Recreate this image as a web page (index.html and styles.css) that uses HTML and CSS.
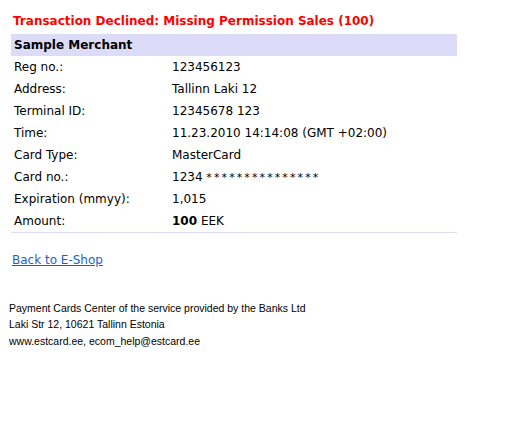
FILE: index.html
```html
<!DOCTYPE html>
<html>
<head>
<meta charset="utf-8">
<link rel="stylesheet" href="styles.css">
</head>
<body>
<div class="page">
  <h1 class="title">Transaction Declined: Missing Permission Sales (100)</h1>
  <table class="info">
    <tr class="head"><th colspan="2">Sample Merchant</th></tr>
    <tr><td class="lbl">Reg no.:</td><td>123456123</td></tr>
    <tr><td class="lbl">Address:</td><td>Tallinn Laki 12</td></tr>
    <tr><td class="lbl">Terminal ID:</td><td>12345678 123</td></tr>
    <tr><td class="lbl">Time:</td><td>11.23.2010 14:14:08 (GMT +02:00)</td></tr>
    <tr><td class="lbl">Card Type:</td><td>MasterCard</td></tr>
    <tr><td class="lbl">Card no.:</td><td>1234 <span class="stars">***************</span></td></tr>
    <tr><td class="lbl">Expiration (mmyy):</td><td>1,015</td></tr>
    <tr class="last"><td class="lbl">Amount:</td><td><b>100</b> EEK</td></tr>
  </table>
  <a class="back" href="#">Back to E-Shop</a>
  <div class="footer">
    <div>Payment Cards Center of the service provided by the Banks Ltd</div>
    <div>Laki Str 12, 10621 Tallinn Estonia</div>
    <div>www.estcard.ee, ecom_help@estcard.ee</div>
  </div>
</div>
</body>
</html>
```
FILE: styles.css
```css
html, body { margin: 0; padding: 0; background: #fff; }
body { font-family: "DejaVu Sans", Verdana, sans-serif; font-size: 12px; color: #000; }
.page { padding: 13px 0 0 11px; width: 446px; }
.title { margin: 0 0 5px 2px; font-size: 12px; font-weight: bold; color: #ff0000; line-height: 16px; }
.info { width: 446px; border-collapse: collapse; }
.info th { background: #dcdcf8; text-align: left; padding: 0 3px; height: 22px; font-weight: bold; }
.info td { padding: 0 3px; height: 22px; vertical-align: middle; }
.info td.lbl { width: 152px; }
.info .stars { font-size: 11px; letter-spacing: 2.1px; }
.info tr.last td { border-bottom: 1px solid #dcdcf8; }
.back { display: block; margin: 18px 0 0 1px; color: #1a5fc8; text-decoration: underline; line-height: 18px; width: fit-content; }
.footer { margin-top: 31px; font-family: "Liberation Sans", Arial, sans-serif; font-size: 10.5px; line-height: 16.3px; margin-left: -2px; }
```
